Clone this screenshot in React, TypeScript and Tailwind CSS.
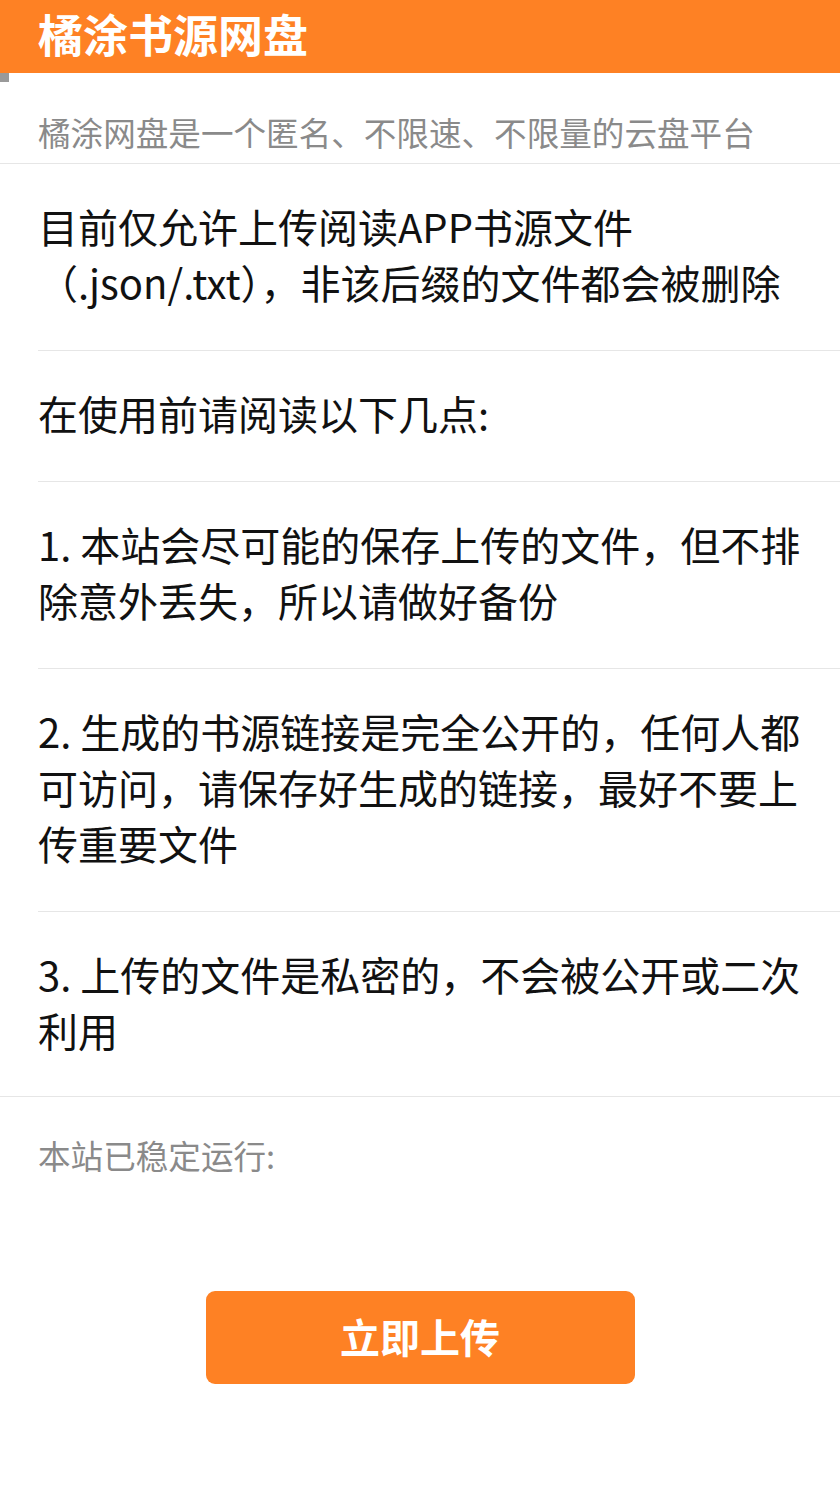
export default function App() {
  const font = { fontFamily: '"Noto Sans CJK SC", "Noto Sans", sans-serif' };
  return (
    <div className="min-h-[1500px] bg-white text-black" style={font}>
      <div className="h-[73px] bg-[#fe8124] flex items-center pl-[38px] pb-[7px]">
        <h1 className="text-[45px] leading-none font-bold text-white">橘涂书源网盘</h1>
      </div>
      <div className="w-[9px] h-[9px] bg-[#9a9a9a]" />
      <div className="border-b border-[#e6e6e6] pl-[38px] pt-[28px] pb-[9px]">
        <p className="text-[32.6px] leading-[44px] text-[#8a8a8a]">
          橘涂网盘是一个匿名、不限速、不限量的云盘平台
        </p>
      </div>
      <div className="border-b border-[#e6e6e6] pl-[38px]">
        <Item lines={["目前仅允许上传阅读APP书源文件", "（.json/.txt），非该后缀的文件都会被删除"]} />
        <Item lines={["在使用前请阅读以下几点:"]} />
        <Item lines={["1. 本站会尽可能的保存上传的文件，但不排", "除意外丢失，所以请做好备份"]} />
        <Item
          lines={[
            "2. 生成的书源链接是完全公开的，任何人都",
            "可访问，请保存好生成的链接，最好不要上",
            "传重要文件",
          ]}
        />
        <Item lines={["3. 上传的文件是私密的，不会被公开或二次", "利用"]} last />
      </div>
      <div className="pl-[38px] pt-[36px]">
        <p className="text-[32.6px] leading-[44px] text-[#8a8a8a]">本站已稳定运行:</p>
      </div>
      <div className="flex justify-center pt-[114px]">
        <button className="w-[429px] h-[93px] rounded-[9px] bg-[#fe8124] text-white text-[40px] font-bold leading-none pb-[4px]">
          立即上传
        </button>
      </div>
    </div>
  );
}

function Item({ lines, last }: { lines: string[]; last?: boolean }) {
  return (
    <div
      className={`pt-[34px] pr-[20px] ${last ? "pb-[38px]" : "pb-[40px] border-b border-[#e6e6e6]"}`}
    >
      {lines.map((l, i) => (
        <div key={i} className="text-[40px] leading-[56px] whitespace-nowrap text-[#111]">
          {l}
        </div>
      ))}
    </div>
  );
}
